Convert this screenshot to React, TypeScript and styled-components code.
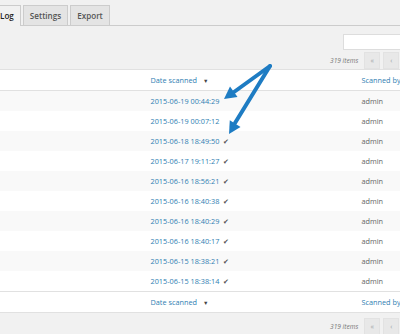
import React from "react";
import styled, { createGlobalStyle } from "styled-components";

interface IScan {
  date: string;
  user: string;
  checked: boolean;
}

const scans: IScan[] = [
  { date: "2015-06-19 00:44:29", user: "admin", checked: false },
  { date: "2015-06-19 00:07:12", user: "admin", checked: false },
  { date: "2015-06-18 18:49:50", user: "admin", checked: true },
  { date: "2015-06-17 19:11:27", user: "admin", checked: true },
  { date: "2015-06-16 18:56:21", user: "admin", checked: true },
  { date: "2015-06-16 18:40:38", user: "admin", checked: true },
  { date: "2015-06-16 18:40:29", user: "admin", checked: true },
  { date: "2015-06-16 18:40:17", user: "admin", checked: true },
  { date: "2015-06-15 18:38:21", user: "admin", checked: true },
  { date: "2015-06-15 18:38:14", user: "admin", checked: true },
];

const GlobalStyle = createGlobalStyle`
  html, body {
    margin: 0;
    padding: 0;
    background: #f1f1f1;
    overflow: hidden;
  }
  body {
    font-family: "Open Sans", "Liberation Sans", sans-serif;
    color: #444;
  }
`;

const Page = styled.div`
  position: relative;
  width: 400px;
  height: 334px;
  overflow: hidden;
`;

const Wrap = styled.div`
  margin-left: -100px;
  width: 620px;
`;

const Tabs = styled.div`
  display: flex;
  gap: 2px;
  padding: 5px 0 0 93px;
  border-bottom: 1px solid #ccc;
  height: 20px;
  box-sizing: content-box;
`;

const Tab = styled.div<{ $active?: boolean }>`
  line-height: 19px;
  padding: 0 6px;
  border: 1px solid #ccc;
  border-bottom: none;
  font-size: 8.1px;
  font-weight: 600;
  color: ${(p) => (p.$active ? "#222" : "#555")};
  background: ${(p) => (p.$active ? "#f1f1f1" : "#e4e4e4")};
  margin-bottom: ${(p) => (p.$active ? "-1px" : "0")};
  height: ${(p) => (p.$active ? "20px" : "19px")};
`;

const SearchRow = styled.div`
  padding: 8px 0 0 443px;
`;

const SearchInput = styled.div`
  width: 160px;
  height: 14px;
  background: #fff;
  border: 1px solid #ddd;
`;

const TableNav = styled.div<{ $top?: boolean }>`
  display: flex;
  align-items: center;
  gap: 3px;
  height: 16px;
  padding-left: 430px;
  margin-top: ${(p) => (p.$top ? "2px" : "5px")};
  margin-bottom: ${(p) => (p.$top ? "1px" : "0")};
`;

const Count = styled.span`
  font-size: 6.6px;
  font-style: italic;
  color: #777;
  margin-right: 3px;
`;

const PageButton = styled.span`
  width: 14px;
  height: 15px;
  line-height: 15px;
  text-align: center;
  font-size: 7px;
  color: #a0a5aa;
  background: #e8e8e8;
  border: 1px solid #e2e2e2;
`;

const PageInput = styled.span`
  width: 20px;
  height: 15px;
  background: #fff;
  border: 1px solid #ddd;
`;

const Table = styled.table`
  width: 620px;
  border-collapse: collapse;
  background: #fff;
  border: 1px solid #e1e1e1;
  font-size: 7.3px;
  table-layout: fixed;
`;

const HeadCell = styled.th<{ $foot?: boolean }>`
  height: 20px;
  padding: 0 10px;
  text-align: left;
  font-weight: 400;
  color: #2f80b2;
  border-bottom: ${(p) => (p.$foot ? "none" : "1px solid #e1e1e1")};
  border-top: ${(p) => (p.$foot ? "1px solid #e1e1e1" : "none")};
`;

const SortMark = styled.span`
  margin-left: 6px;
  font-size: 5.5px;
  color: #444;
`;

const Row = styled.tr<{ $striped: boolean }>`
  background: ${(p) => (p.$striped ? "#f9f9f9" : "#fff")};
`;

const Cell = styled.td`
  height: 20px;
  padding: 0 10px;
  white-space: nowrap;
`;

const DateLink = styled.span`
  color: #2f80b2;
`;

const Check = styled.span`
  margin-left: 4px;
  font-size: 6.5px;
  color: #555;
`;

const UserText = styled.span`
  color: #666;
`;

const Arrows = styled.svg`
  position: absolute;
  left: 0;
  top: 0;
  pointer-events: none;
`;

export default function App() {
  return (
    <Page>
      <GlobalStyle />
      <Wrap>
        <Tabs>
          <Tab $active>Log</Tab>
          <Tab>Settings</Tab>
          <Tab>Export</Tab>
        </Tabs>
        <SearchRow>
          <SearchInput />
        </SearchRow>
        <TableNav $top>
          <Count>319 items</Count>
          <PageButton>«</PageButton>
          <PageButton>‹</PageButton>
          <PageInput />
        </TableNav>
        <Table>
          <colgroup>
            <col style={{ width: 240 }} />
            <col style={{ width: 211 }} />
            <col />
          </colgroup>
          <thead>
            <tr>
              <HeadCell />
              <HeadCell>
                Date scanned<SortMark>▼</SortMark>
              </HeadCell>
              <HeadCell>Scanned by</HeadCell>
            </tr>
          </thead>
          <tbody>
            {scans.map((scan, i) => (
              <Row key={scan.date} $striped={i % 2 === 0}>
                <Cell />
                <Cell>
                  <DateLink>{scan.date}</DateLink>
                  {scan.checked && <Check>✔</Check>}
                </Cell>
                <Cell>
                  <UserText>{scan.user}</UserText>
                </Cell>
              </Row>
            ))}
          </tbody>
          <tfoot>
            <tr>
              <HeadCell $foot />
              <HeadCell $foot>
                Date scanned<SortMark>▼</SortMark>
              </HeadCell>
              <HeadCell $foot>Scanned by</HeadCell>
            </tr>
          </tfoot>
        </Table>
        <TableNav>
          <Count>319 items</Count>
          <PageButton>«</PageButton>
          <PageButton>‹</PageButton>
        </TableNav>
      </Wrap>
      <Arrows width="400" height="334" viewBox="0 0 400 334">
        <g stroke="#1e7cc3" strokeWidth="4" strokeLinecap="round" fill="none">
          <line x1="270" y1="66" x2="234" y2="92" />
          <line x1="270" y1="66" x2="235" y2="123" />
        </g>
        <g fill="#1e7cc3">
          <polygon points="224,99 237.5,97 230,86.5" />
          <polygon points="229,134 240.5,127 229.8,120.3" />
        </g>
      </Arrows>
    </Page>
  );
}
